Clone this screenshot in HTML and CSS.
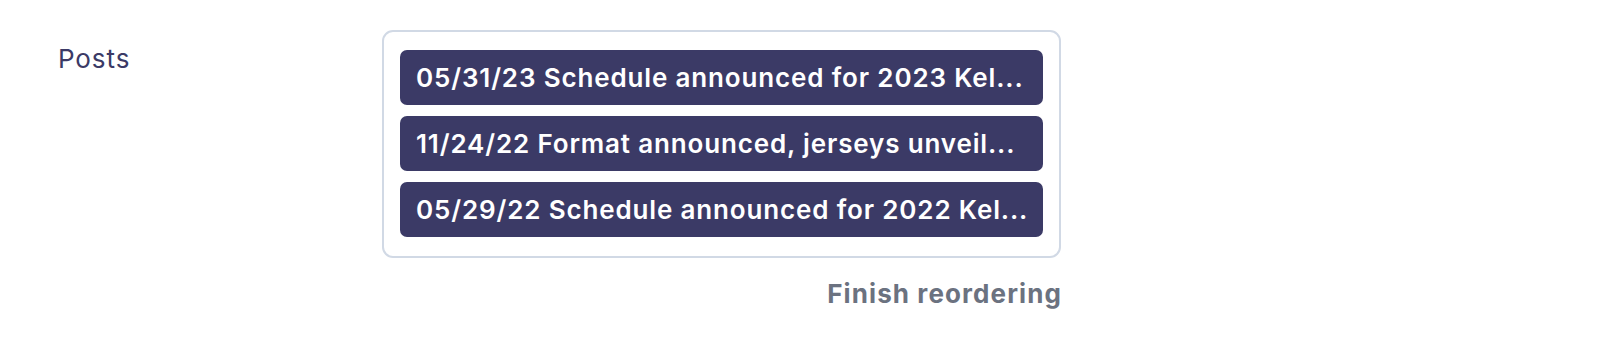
FILE: index.html
```html
<!DOCTYPE html>
<html>
<head>
<meta charset="utf-8">
<link rel="stylesheet" href="styles.css">
</head>
<body>
<div class="row">
  <div class="label">Posts</div>
  <div class="field">
    <div class="list">
      <div class="item">05/31/23 Schedule announced for 2023 Kel...</div>
      <div class="item">11/24/22 Format announced, jerseys unveil...</div>
      <div class="item">05/29/22 Schedule announced for 2022 Kel...</div>
    </div>
    <div class="actions"><a class="finish">Finish reordering</a></div>
  </div>
</div>
</body>
</html>
```
FILE: styles.css
```css
html, body {
  margin: 0;
  padding: 0;
  background: #ffffff;
}
body {
  font-family: Inter, "Noto Sans", sans-serif;
}
.row {
  display: flex;
  padding: 30px 0 0 58px;
}
.label {
  width: 324px;
  flex: none;
  color: #3b3a66;
  font-size: 26px;
  line-height: 32px;
  padding-top: 13px;
  letter-spacing: 0.9px;
}
.field {
  width: 679px;
  flex: none;
}
.list {
  border: 2px solid #d1d9e5;
  border-radius: 11px;
  padding: 18px 16px 19px;
  display: flex;
  flex-direction: column;
  gap: 11px;
}
.item {
  background: #3b3a66;
  color: #ffffff;
  border-radius: 7px;
  height: 55px;
  line-height: 55px;
  padding: 0 10px 0 16px;
  font-size: 26px;
  font-weight: 600;
  letter-spacing: 0.85px;
  white-space: nowrap;
  overflow: hidden;
}
.actions {
  display: flex;
  justify-content: flex-end;
  padding-top: 20px;
}
.finish {
  color: #6b7280;
  font-size: 26px;
  font-weight: 700;
  line-height: 32px;
  letter-spacing: 1.1px;
  margin-right: -1px;
}
```
